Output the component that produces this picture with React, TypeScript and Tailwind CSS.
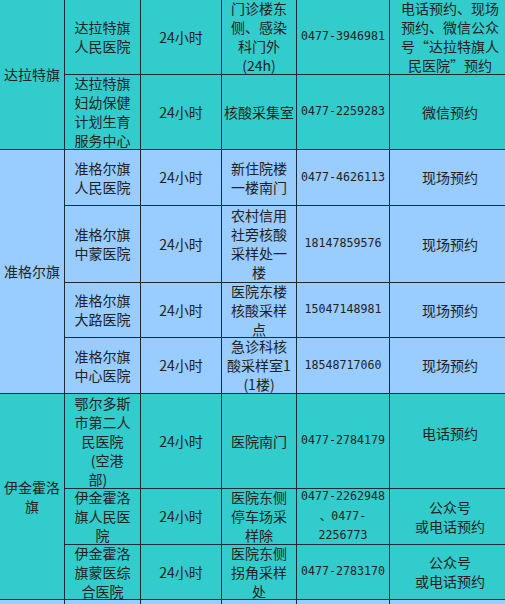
import React from "react";

type Row = {
  name: string[];
  place: string[];
  phone: string[];
  way: string[];
  bg: string;
  wayClass?: string;
};

const groups: { county: string[]; rowSpan: string; bg: string; rows: Row[] }[] = [
  {
    county: ["达拉特旗"],
    rowSpan: "row-span-2",
    bg: "bg-[#33cccc]",
    rows: [
      {
        name: ["达拉特旗", "人民医院"],
        place: ["门诊楼东", "侧、感染", "科门外", "（24h）"],
        phone: ["0477-3946981"],
        way: ["电话预约、现场", "预约、微信公众", "号“达拉特旗人", "民医院”预约"],
        bg: "bg-[#33cccc]",
      },
      {
        name: ["达拉特旗", "妇幼保健", "计划生育", "服务中心"],
        place: ["核酸采集室"],
        phone: ["0477-2259283"],
        way: ["微信预约"],
        bg: "bg-[#33cccc]",
      },
    ],
  },
  {
    county: ["准格尔旗"],
    rowSpan: "row-span-4",
    bg: "bg-[#99ccff]",
    rows: [
      {
        name: ["准格尔旗", "人民医院"],
        place: ["新住院楼", "一楼南门"],
        phone: ["0477-4626113"],
        way: ["现场预约"],
        bg: "bg-[#99ccff]",
      },
      {
        name: ["准格尔旗", "中蒙医院"],
        place: ["农村信用", "社旁核酸", "采样处一", "楼"],
        phone: ["18147859576"],
        way: ["现场预约"],
        bg: "bg-[#99ccff]",
      },
      {
        name: ["准格尔旗", "大路医院"],
        place: ["医院东楼", "核酸采样", "点"],
        phone: ["15047148981"],
        way: ["现场预约"],
        bg: "bg-[#99ccff]",
      },
      {
        name: ["准格尔旗", "中心医院"],
        place: ["急诊科核", "酸采样室1", "（1楼）"],
        phone: ["18548717060"],
        way: ["现场预约"],
        bg: "bg-[#99ccff]",
      },
    ],
  },
  {
    county: ["伊金霍洛", "旗"],
    rowSpan: "row-span-3",
    bg: "bg-[#33cccc]",
    rows: [
      {
        name: ["鄂尔多斯", "市第二人", "民医院", "（空港", "部）"],
        place: ["医院南门"],
        phone: ["0477-2784179"],
        way: ["电话预约"],
        bg: "bg-[#33cccc]",
        wayClass: "pb-[16px]",
      },
      {
        name: ["伊金霍洛", "旗人民医", "院"],
        place: ["医院东侧", "停车场采", "样除"],
        phone: ["0477-2262948", "、0477-", "2256773"],
        way: ["公众号", "或电话预约"],
        bg: "bg-[#33cccc]",
      },
      {
        name: ["伊金霍洛", "旗蒙医综", "合医院"],
        place: ["医院东侧", "拐角采样", "处"],
        phone: ["0477-2783170"],
        way: ["公众号", "或电话预约"],
        bg: "bg-[#33cccc]",
      },
    ],
  },
];

// full-width brackets get squeezed by the browser, so give them a full em box
function Line({ text }: { text: string }) {
  const parts = text.split(/([（）])/).filter(Boolean);
  return (
    <div>
      {parts.map((p, i) =>
        p === "（" ? (
          <span key={i} className="inline-block w-[14px] text-right">
            (
          </span>
        ) : p === "）" ? (
          <span key={i} className="inline-block w-[14px] text-left">
            )
          </span>
        ) : (
          <React.Fragment key={i}>{p}</React.Fragment>
        ),
      )}
    </div>
  );
}

function Cell({
  lines,
  bg,
  mono,
  className,
}: {
  lines: string[];
  bg: string;
  mono?: boolean;
  className?: string;
}) {
  return (
    <div
      className={`flex items-center justify-center overflow-hidden text-center text-[#222] ${bg} ${
        mono
          ? "font-['DejaVu_Sans_Mono','Noto_Sans_CJK_SC',monospace] text-[11.6px] leading-[19.5px]"
          : "text-[14px] leading-[19px]"
      } ${className ?? ""}`}
    >
      <div className="whitespace-nowrap">
        {lines.map((l, i) => (
          <Line key={i} text={l} />
        ))}
      </div>
    </div>
  );
}

export default function App() {
  return (
    <div className="h-[604px] w-[505px] overflow-hidden bg-white font-['Noto_Sans_CJK_SC','Noto_Sans',sans-serif]">
      <div className="grid w-max grid-cols-[64px_75px_80px_74px_92px_120px] grid-rows-[74px_74px_55px_76px_54px_55px_94px_55px_54px_20px] gap-px bg-[#1b2b36]">
        {groups.map((g) => (
          <React.Fragment key={g.county.join("")}>
            <Cell lines={g.county} bg={g.bg} className={g.rowSpan} />
            {g.rows.map((r) => (
              <React.Fragment key={r.name.join("")}>
                <Cell lines={r.name} bg={r.bg} />
                <Cell lines={["24小时"]} bg={r.bg} />
                <Cell lines={r.place} bg={r.bg} />
                <Cell lines={r.phone} bg={r.bg} mono />
                <Cell lines={r.way} bg={r.bg} className={r.wayClass} />
              </React.Fragment>
            ))}
          </React.Fragment>
        ))}
        {/* next group, cut off at the bottom */}
        {[0, 1, 2, 3, 4, 5].map((i) => (
          <div key={i} className="bg-[#99ccff]" />
        ))}
      </div>
    </div>
  );
}
